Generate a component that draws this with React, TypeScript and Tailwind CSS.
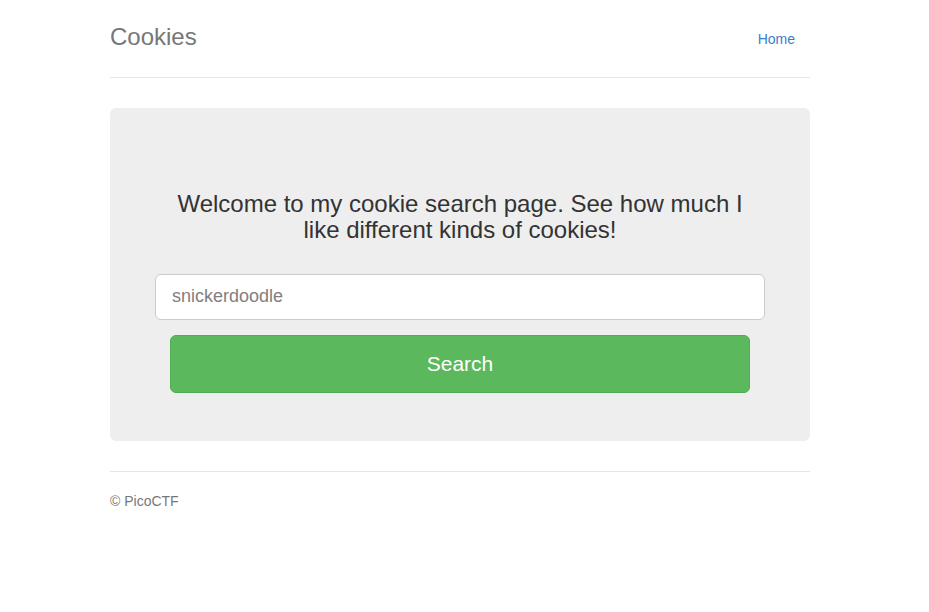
import React from "react";

export default function App() {
  return (
    <div className="min-h-screen bg-white" style={{ fontFamily: '"Liberation Sans", Arial, sans-serif' }}>
      <div className="ml-[110px] w-[700px]">
        <div className="flex items-start justify-between border-b border-[#e5e5e5] pt-[17px] pb-[19px]">
          <h3 className="m-0 text-[24px] leading-[40px] text-[#777]">Cookies</h3>
          <a href="#" className="mt-[1px] px-[15px] pt-[11px] pb-[9px] text-[14px] leading-[20px] text-[#3a80c8]">Home</a>
        </div>
        <div className="mt-[30px] rounded-[6px] bg-[#eee] px-[60px] pt-[48px] pb-[48px] text-center">
          <p className="mt-[35px] text-[24px] leading-[26.4px] text-[#333]">
            Welcome to my cookie search page. See how much I like different kinds of cookies!
          </p>
          <div className="mx-[-15px] mt-[30px]">
            <input
              type="text"
              placeholder="snickerdoodle"
              className="block h-[46px] w-full rounded-[6px] border border-[#ccc] bg-white px-[16px] text-[18px] text-[#555] placeholder:text-[#857d7d] outline-none"
            />
          </div>
          <button className="mt-[15px] block h-[58px] w-full rounded-[6px] border border-[#4cae4c] bg-[#5cb85c] text-[21px] text-white">
            Search
          </button>
        </div>
        <div className="mt-[30px] border-t border-[#e5e5e5] pt-[19px] text-left">
          <p className="text-[14px] leading-[20px] text-[#777]">© PicoCTF</p>
        </div>
      </div>
    </div>
  );
}
